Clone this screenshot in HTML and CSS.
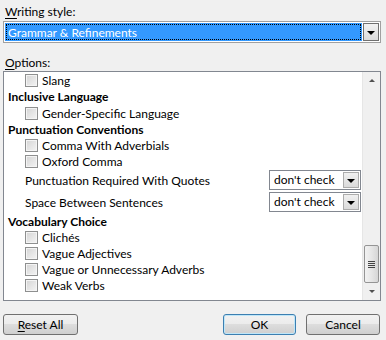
FILE: index.html
```html
<!DOCTYPE html>
<html>
<head>
<meta charset="utf-8">
<link rel="stylesheet" href="styles.css">
</head>
<body>
<div class="dialog">
  <div class="lbl lbl-style"><u>W</u>riting style:</div>
  <div class="combo">
    <div class="combo-value"><span class="focus">Grammar &amp; Refinements</span></div>
    <div class="combo-btn"><span class="arrow"></span></div>
  </div>
  <div class="lbl lbl-options"><u>O</u>ptions:</div>
  <div class="list">
    <div class="list-body">
      <div class="row check r16"><span class="box"></span>Slang</div>
      <div class="row head r17">Inclusive Language</div>
      <div class="row check r16"><span class="box"></span>Gender-Specific Language</div>
      <div class="row head r16">Punctuation Conventions</div>
      <div class="row check r16"><span class="box"></span>Comma With Adverbials</div>
      <div class="row check r16"><span class="box"></span>Oxford Comma</div>
      <div class="row select-row"><span class="sel-label">Punctuation Required With Quotes</span><span class="dd"><span class="dd-val">don't check</span><span class="dd-btn"><span class="arrow"></span></span></span></div>
      <div class="row select-row"><span class="sel-label">Space Between Sentences</span><span class="dd"><span class="dd-val">don't check</span><span class="dd-btn"><span class="arrow"></span></span></span></div>
      <div class="row head r16">Vocabulary Choice</div>
      <div class="row check r16"><span class="box"></span>Clichés</div>
      <div class="row check r16"><span class="box"></span>Vague Adjectives</div>
      <div class="row check r16"><span class="box"></span>Vague or Unnecessary Adverbs</div>
      <div class="row check r16"><span class="box"></span>Weak Verbs</div>
    </div>
    <div class="scrollbar">
      <div class="sb-up"><span class="tri-up"></span></div>
      <div class="sb-track">
        <div class="thumb"><span class="grip"></span><span class="grip"></span><span class="grip"></span><span class="grip"></span></div>
      </div>
      <div class="sb-down"><span class="tri-down"></span></div>
    </div>
  </div>
  <div class="buttons">
    <button class="btn btn-reset"><u>R</u>eset All</button>
    <span class="spacer"></span>
    <button class="btn btn-ok">OK</button>
    <button class="btn btn-cancel">Cancel</button>
  </div>
</div>
</body>
</html>
```

FILE: styles.css
```css
html, body {
  margin: 0;
  padding: 0;
  background: #f0f0f0;
}
body {
  font-family: Lato, "Noto Sans", sans-serif;
  font-size: 12px;
  color: #000;
  width: 386px;
  height: 340px;
  overflow: hidden;
}
.dialog {
  padding: 4px 6px 0 3px;
}
.lbl {
  height: 17px;
  line-height: 15px;
  padding-left: 2px;
}
.lbl u { text-decoration: underline; text-underline-offset: 2px; }
.combo {
  width: 378px;
  height: 22px;
  box-sizing: border-box;
  border: 1px solid #a0a0a0;
  background: #fff;
  display: flex;
  padding: 1px;
}
.combo-value {
  flex: 1;
  background: #3399ff;
  color: #fff;
  display: flex;
  align-items: center;
  padding: 1px;
  margin-right: 1px;
}
.focus {
  flex: 1;
  height: 100%;
  box-sizing: border-box;
  padding-left: 1px;
  line-height: 15px;
  border: 1px dotted #000;
}
.combo-btn {
  width: 16px;
  box-sizing: border-box;
  border: 1px solid #707070;
  background: linear-gradient(#f2f2f2, #dcdcdc);
  display: flex;
  align-items: center;
  justify-content: center;
}
.arrow {
  width: 0;
  height: 0;
  border-left: 4px solid transparent;
  border-right: 4px solid transparent;
  border-top: 4px solid #000;
  margin-top: 1px;
}
.lbl-options {
  margin-top: 12px;
  height: 16px;
  line-height: 15px;
}
.list {
  width: 378px;
  height: 230px;
  box-sizing: border-box;
  border: 1px solid #828790;
  background: #fff;
  display: flex;
  overflow: hidden;
}
.list-body {
  flex: 1;
  padding-left: 4px;
}
.row {
  display: flex;
  align-items: center;
  white-space: nowrap;
}
.r16 { height: 16px; }
.r17 { height: 17px; }
.head {
  font-weight: bold;
}
.check {
  padding-left: 17px;
}
.box {
  width: 11px;
  height: 11px;
  border: 1px solid #8e8f8f;
  background: linear-gradient(135deg, #d4d4d4, #f4f4f4);
  box-shadow: inset 0 0 0 1px #f4f4f4;
  margin-right: 4px;
  flex: none;
}
.select-row {
  height: 22px;
  padding-left: 17px;
  justify-content: space-between;
}
.dd {
  width: 92px;
  height: 20px;
  box-sizing: border-box;
  border: 1px solid #828790;
  background: #fff;
  display: flex;
  margin-right: 1px;
}
.dd-val {
  flex: 1;
  padding-left: 4px;
  line-height: 18px;
}
.dd-btn {
  width: 16px;
  margin: 1px;
  box-sizing: border-box;
  border: 1px solid #acacac;
  background: linear-gradient(#f0f0f0, #dadada);
  display: flex;
  align-items: center;
  justify-content: center;
}
.scrollbar {
  width: 17px;
  background: #f0f0f0;
  border-left: 1px solid #e6e6e6;
  display: flex;
  flex-direction: column;
}
.sb-up, .sb-down {
  height: 17px;
  display: flex;
  align-items: center;
  justify-content: center;
}
.tri-up {
  width: 0; height: 0;
  border-left: 3px solid transparent;
  border-right: 3px solid transparent;
  border-bottom: 3px solid #505050;
}
.tri-down {
  width: 0; height: 0;
  border-left: 3px solid transparent;
  border-right: 3px solid transparent;
  border-top: 3px solid #505050;
}
.sb-track {
  flex: 1;
  display: flex;
  flex-direction: column;
  justify-content: flex-end;
}
.thumb {
  height: 38px;
  margin: 0 1px 0 1px;
  box-sizing: border-box;
  border: 1px solid #959595;
  border-radius: 2px;
  background: linear-gradient(90deg, #f2f2f2, #e6e6e6 50%, #d6d6d6);
  display: flex;
  flex-direction: column;
  align-items: center;
  justify-content: center;
  gap: 1px;
}
.grip {
  width: 7px;
  height: 1px;
  background: #444;
}
.buttons {
  display: flex;
  margin-top: 13px;
}
.spacer { flex: 1; }
.btn {
  font-family: inherit;
  font-size: inherit;
  height: 21px;
  box-sizing: border-box;
  border: 1px solid #707070;
  border-radius: 3px;
  background: linear-gradient(#f2f2f2 0%, #ebebeb 49%, #dddddd 50%, #cfcfcf 100%);
  padding: 0;
  color: #000;
}
.btn u { text-decoration: underline; text-underline-offset: 2px; }
.btn-reset { width: 75px; }
.btn-ok {
  width: 73px;
  border-color: #3c7fb1;
  box-shadow: inset 0 0 0 1px #bfe6f8;
}
.btn-cancel { width: 74px; margin-left: 10px; }
```
